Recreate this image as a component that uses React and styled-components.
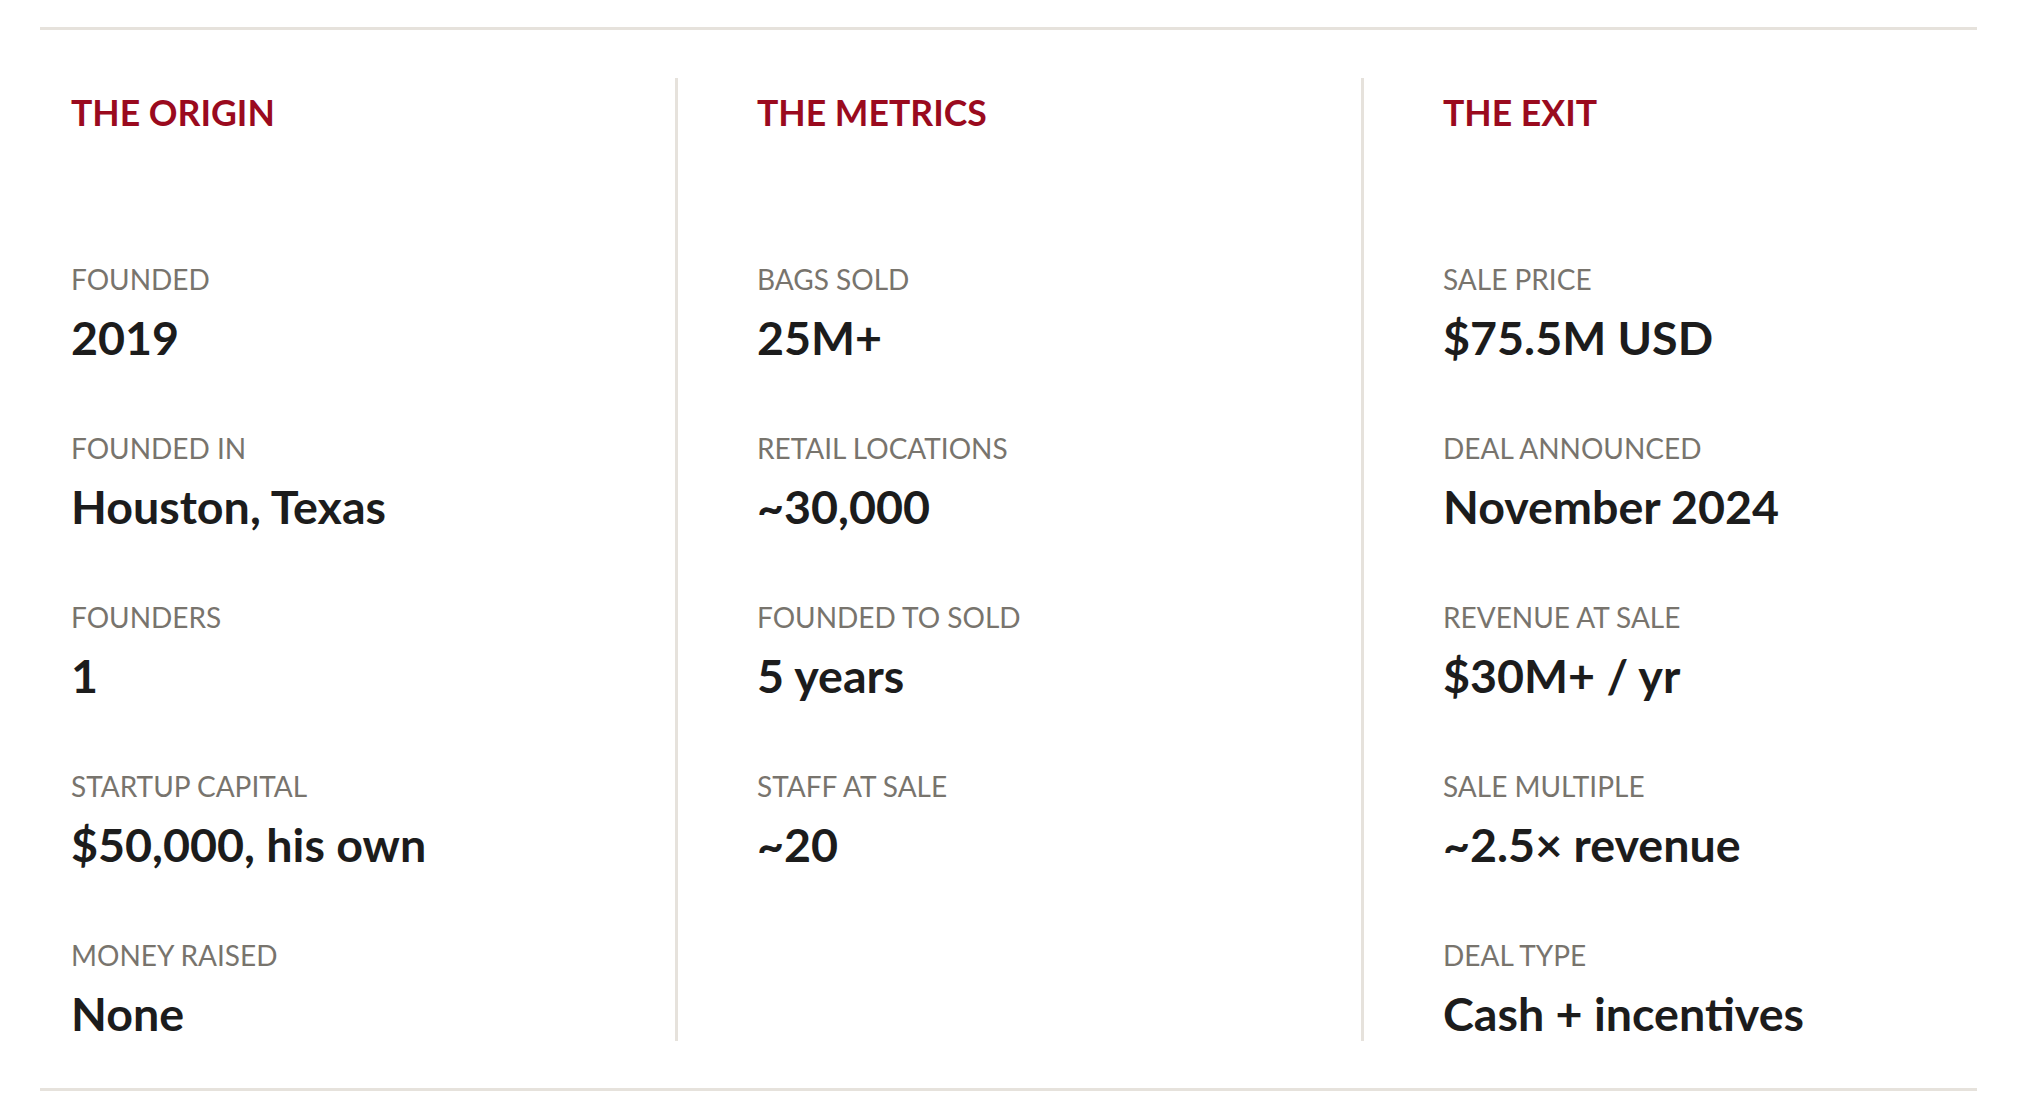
import styled, { createGlobalStyle } from "styled-components";

const GlobalStyle = createGlobalStyle`
  html, body {
    margin: 0;
    padding: 0;
    background: #ffffff;
  }
  body {
    font-family: Lato, "Liberation Sans", sans-serif;
    -webkit-font-smoothing: antialiased;
  }
`;

const Page = styled.div`
  padding: 27px 40px 0;
`;

const Facts = styled.section`
  display: grid;
  grid-template-columns: 604px 686px 1fr;
  padding: 48px 0 47px 31px;
  border-top: 3px solid #e6e2dc;
  border-bottom: 3px solid #e6e2dc;
`;

const Column = styled.div`
  display: flex;
  flex-direction: column;
  padding-top: 13px;
  padding-left: ${({ $first }) => ($first ? "0" : "79px")};
  border-left: ${({ $first }) => ($first ? "none" : "3px solid #e6e2dc")};
`;

const Heading = styled.h2`
  margin: 0 0 129px;
  font-size: 35.6px;
  line-height: 43.2px;
  font-weight: 700;
  color: #9a0a1e;
  text-transform: uppercase;
`;

const Stats = styled.dl`
  display: flex;
  flex-direction: column;
  gap: 67px;
  margin: 0;
`;

const Stat = styled.div`
  display: flex;
  flex-direction: column;
  gap: 12px;
`;

const Label = styled.dt`
  font-size: 28px;
  line-height: 33.6px;
  font-weight: 400;
  color: #78746d;
  text-transform: uppercase;
`;

const Value = styled.dd`
  margin: 0;
  font-size: 46.6px;
  line-height: 56.4px;
  font-weight: 700;
  color: #1c1c1c;
`;

const columns = [
  {
    title: "The Origin",
    stats: [
      ["Founded", "2019"],
      ["Founded in", "Houston, Texas"],
      ["Founders", "1"],
      ["Startup capital", "$50,000, his own"],
      ["Money raised", "None"],
    ],
  },
  {
    title: "The Metrics",
    stats: [
      ["Bags sold", "25M+"],
      ["Retail locations", "~30,000"],
      ["Founded to sold", "5 years"],
      ["Staff at sale", "~20"],
    ],
  },
  {
    title: "The Exit",
    stats: [
      ["Sale price", "$75.5M USD"],
      ["Deal announced", "November 2024"],
      ["Revenue at sale", "$30M+ / yr"],
      ["Sale multiple", "~2.5× revenue"],
      ["Deal type", "Cash + incentives"],
    ],
  },
];

export default function App() {
  return (
    <>
      <GlobalStyle />
      <Page>
        <Facts>
          {columns.map((col, i) => (
            <Column key={col.title} $first={i === 0}>
              <Heading>{col.title}</Heading>
              <Stats>
                {col.stats.map(([label, value]) => (
                  <Stat key={label}>
                    <Label>{label}</Label>
                    <Value>{value}</Value>
                  </Stat>
                ))}
              </Stats>
            </Column>
          ))}
        </Facts>
      </Page>
    </>
  );
}
